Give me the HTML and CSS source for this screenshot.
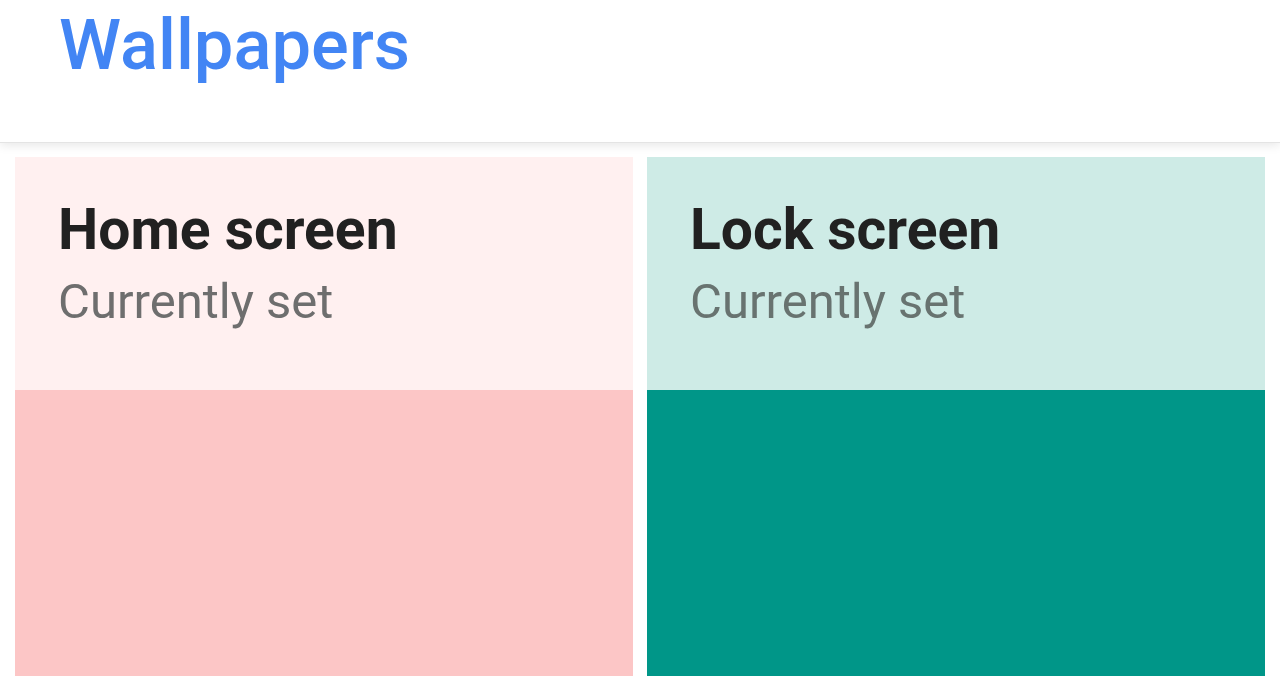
FILE: index.html
```html
<!DOCTYPE html>
<html>
<head>
<meta charset="utf-8">
<link rel="stylesheet" href="styles.css">
</head>
<body>
<header class="bar">
  <h1 class="title">Wallpapers</h1>
</header>
<main class="grid">
  <section class="card home">
    <div class="card-top">
      <h2 class="card-title">Home screen</h2>
      <p class="card-sub">Currently set</p>
    </div>
    <div class="card-preview"></div>
  </section>
  <section class="card lock">
    <div class="card-top">
      <h2 class="card-title">Lock screen</h2>
      <p class="card-sub">Currently set</p>
    </div>
    <div class="card-preview"></div>
  </section>
</main>
</body>
</html>
```
FILE: styles.css
```css
html, body {
  margin: 0;
  padding: 0;
  background: #ffffff;
  font-family: Roboto, "Noto Sans", sans-serif;
  overflow: hidden;
  height: 676px;
}
.bar {
  height: 143px;
  box-sizing: border-box;
  padding: 10px 0 0 59px;
  background: #ffffff;
  border-bottom: 1px solid #e4e4e4;
  box-shadow: 0 2px 10px rgba(0, 0, 0, 0.10);
  position: relative;
  z-index: 1;
}
.title {
  margin: 0;
  font-size: 70.5px;
  line-height: 1;
  font-weight: 500;
  color: #4285f4;
  letter-spacing: 0;
}
.grid {
  display: grid;
  grid-template-columns: 618px 618px;
  column-gap: 14px;
  padding: 14px 15px 0 15px;
}
.card-top {
  height: 233px;
  box-sizing: border-box;
  padding: 44px 0 0 43px;
}
.card-title {
  margin: 0;
  font-size: 57px;
  line-height: 1;
  font-weight: 700;
  color: #212121;
}
.card-sub {
  margin: 19px 0 0 0;
  font-size: 49px;
  line-height: 1;
  font-weight: 400;
  color: #6e6e6e;
}
.card-preview {
  height: 286px;
}
.home .card-top { background: #fff0f0; }
.home .card-preview { background: #fcc6c6; }
.lock .card-top { background: #ceebe6; }
.lock .card-preview { background: #009688; }
.lock .card-sub { color: #687370; }
```
